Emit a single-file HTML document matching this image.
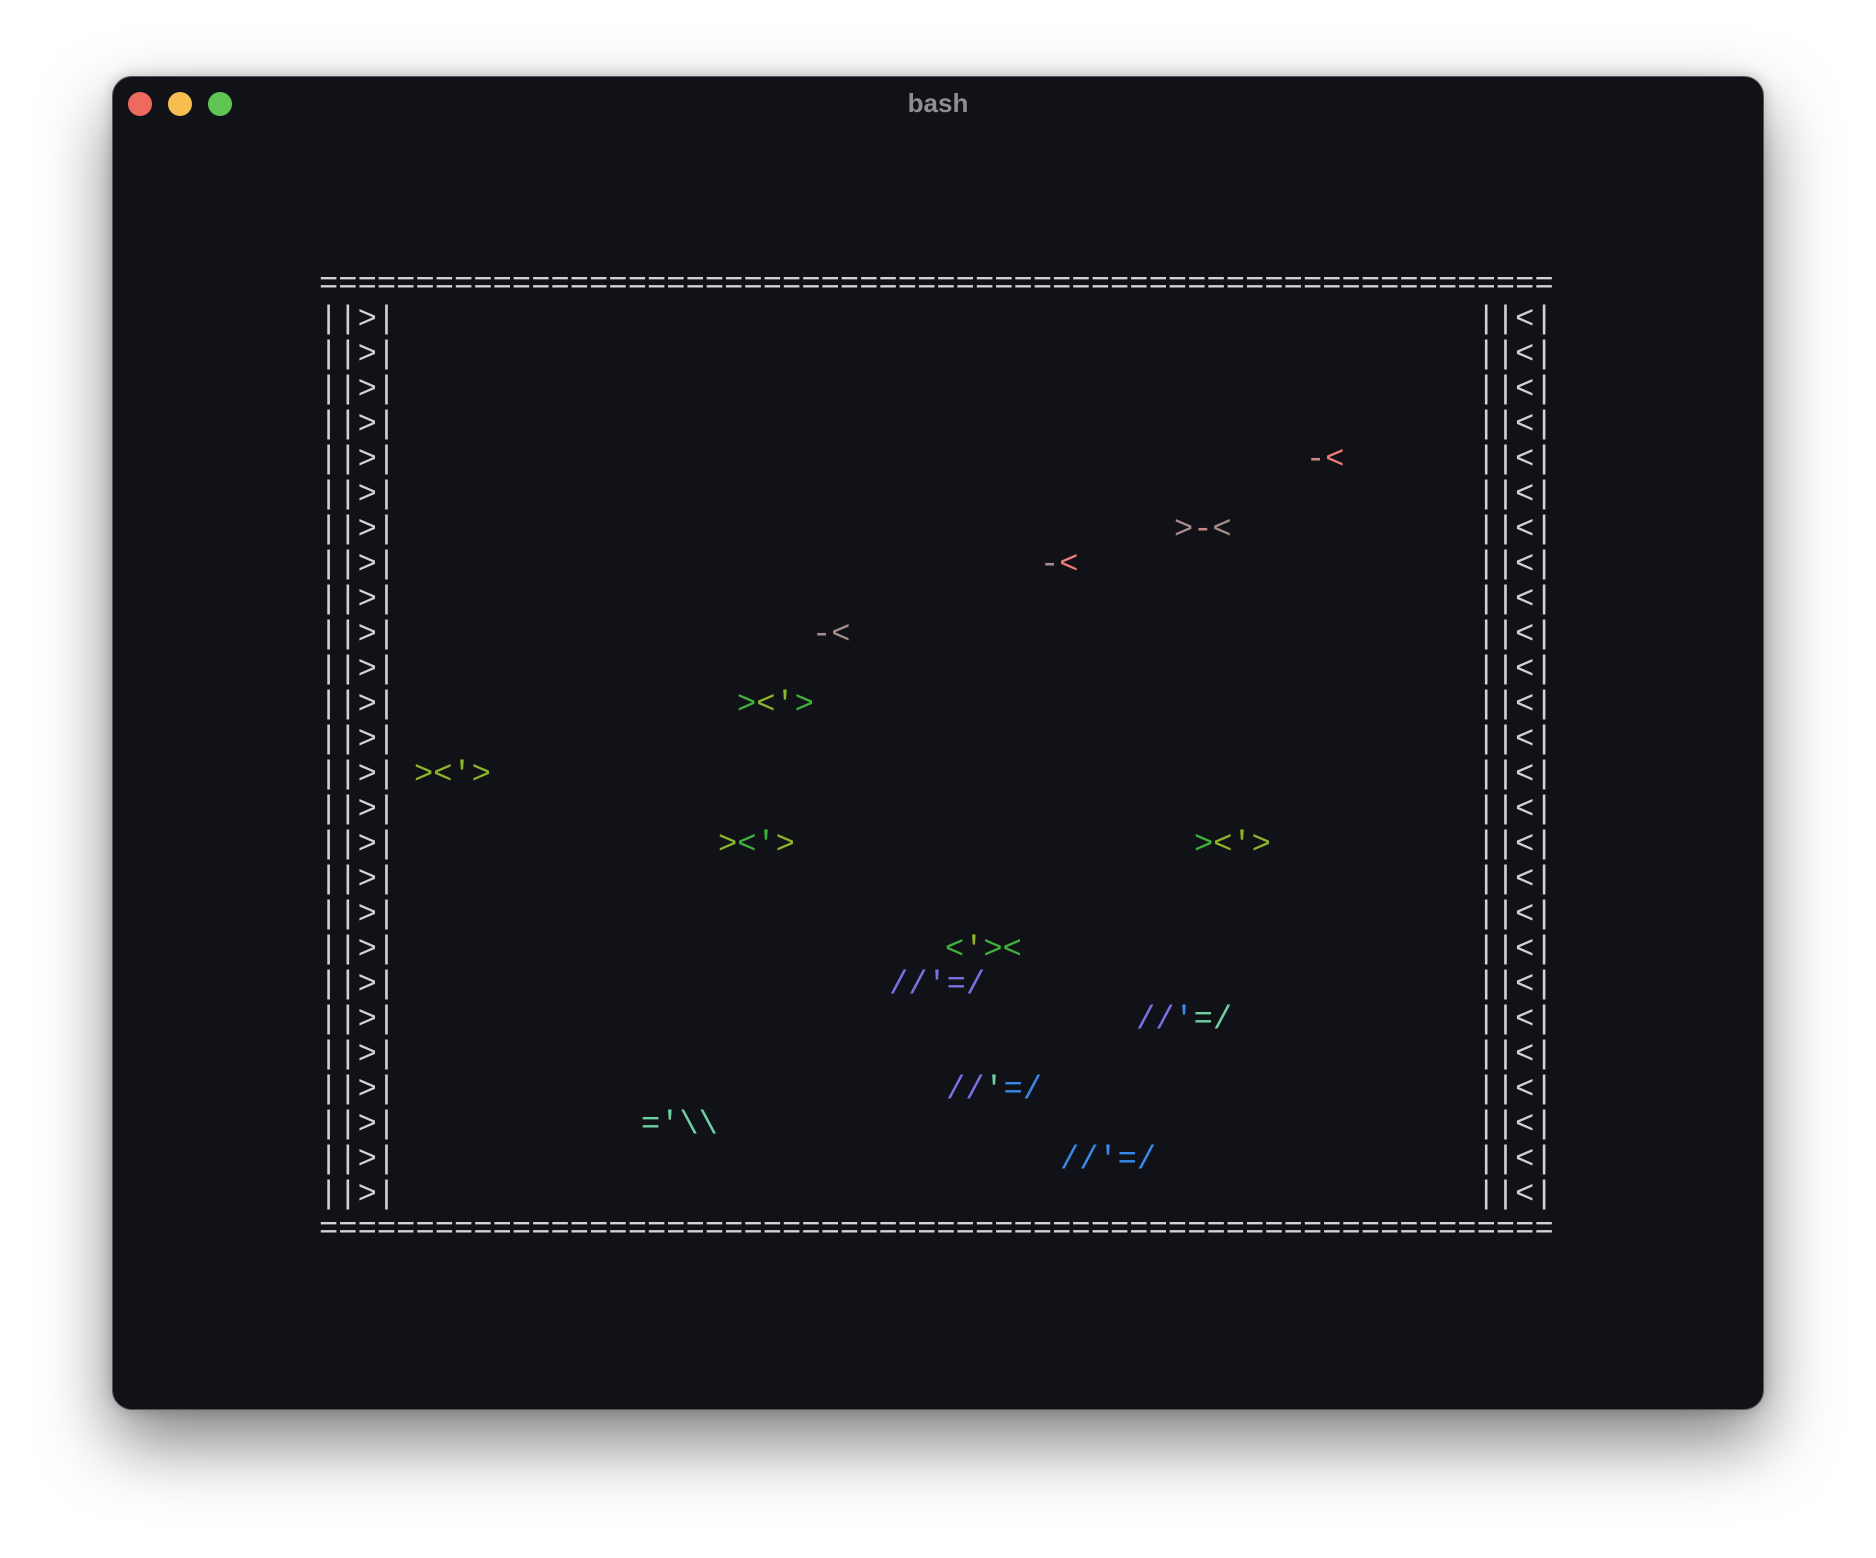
<!DOCTYPE html>
<html><head><meta charset="utf-8"><style>
html,body{margin:0;padding:0;background:#fff;width:1876px;height:1558px;overflow:hidden;position:relative}
.win{position:absolute;left:112px;top:76px;width:1650px;height:1332px;background:#111217;border:1px solid #55575c;border-radius:20px;box-shadow:0 32px 70px rgba(0,0,0,0.5),0 0 14px rgba(0,0,0,0.2)}
.dot{position:absolute;top:92px;width:24px;height:24px;border-radius:50%}
.title{position:absolute;top:88px;left:0;width:1876px;text-align:center;font:bold 26px "Liberation Sans",sans-serif;color:#8d8e92}
pre,.f{font-family:"Liberation Mono",monospace;font-size:32px;line-height:35px;margin:0;position:absolute}
pre{left:319px;top:267px;color:#d2d2d2;letter-spacing:0.09px}
.f{white-space:pre}
.g{color:#3db33a}.o{color:#8db52b}.p{color:#7b6fe3}.b{color:#3a88ea}.t{color:#6fd1a1}
.r{color:#f07c7a}.d{color:#c98886}.q{color:#a88c8c}
</style></head><body>
<div class="win"></div>
<div class="dot" style="left:128px;background:#ee6a5f"></div>
<div class="dot" style="left:168px;background:#f5be4f"></div>
<div class="dot" style="left:208px;background:#61c554"></div>
<div class="title">bash</div>
<pre>================================================================
||&gt;|                                                        ||&lt;|
||&gt;|                                                        ||&lt;|
||&gt;|                                                        ||&lt;|
||&gt;|                                                        ||&lt;|
||&gt;|                                                        ||&lt;|
||&gt;|                                                        ||&lt;|
||&gt;|                                                        ||&lt;|
||&gt;|                                                        ||&lt;|
||&gt;|                                                        ||&lt;|
||&gt;|                                                        ||&lt;|
||&gt;|                                                        ||&lt;|
||&gt;|                                                        ||&lt;|
||&gt;|                                                        ||&lt;|
||&gt;|                                                        ||&lt;|
||&gt;|                                                        ||&lt;|
||&gt;|                                                        ||&lt;|
||&gt;|                                                        ||&lt;|
||&gt;|                                                        ||&lt;|
||&gt;|                                                        ||&lt;|
||&gt;|                                                        ||&lt;|
||&gt;|                                                        ||&lt;|
||&gt;|                                                        ||&lt;|
||&gt;|                                                        ||&lt;|
||&gt;|                                                        ||&lt;|
||&gt;|                                                        ||&lt;|
||&gt;|                                                        ||&lt;|
================================================================</pre>
<div class="f" style="left:1306px;top:442px"><span class="d">-</span><span class="r">&lt;</span></div>
<div class="f" style="left:1174px;top:512px"><span class="q">&gt;</span><span class="d">-</span><span class="q">&lt;</span></div>
<div class="f" style="left:1040px;top:547px"><span class="q">-</span><span class="r">&lt;</span></div>
<div class="f" style="left:812px;top:617px"><span class="q">-&lt;</span></div>
<div class="f" style="left:737px;top:687px"><span class="g">&gt;</span><span class="o">&lt;'</span><span class="g">&gt;</span></div>
<div class="f" style="left:414px;top:757px"><span class="o">&gt;&lt;'&gt;</span></div>
<div class="f" style="left:718px;top:827px"><span class="o">&gt;</span><span class="g">&lt;'</span><span class="o">&gt;</span></div>
<div class="f" style="left:1194px;top:827px"><span class="g">&gt;</span><span class="o">&lt;'&gt;</span></div>
<div class="f" style="left:945px;top:932px"><span class="g">&lt;</span><span class="o">'</span><span class="g">&gt;&lt;</span></div>
<div class="f" style="left:889px;top:967px"><span class="p">//'=/</span></div>
<div class="f" style="left:1136px;top:1002px"><span class="p">//</span><span class="b">'</span><span class="t">=/</span></div>
<div class="f" style="left:946px;top:1072px"><span class="p">//</span><span class="t">'</span><span class="b">=/</span></div>
<div class="f" style="left:641px;top:1107px"><span class="t">='\\</span></div>
<div class="f" style="left:1060px;top:1142px"><span class="b">//'=/</span></div>
</body></html>
